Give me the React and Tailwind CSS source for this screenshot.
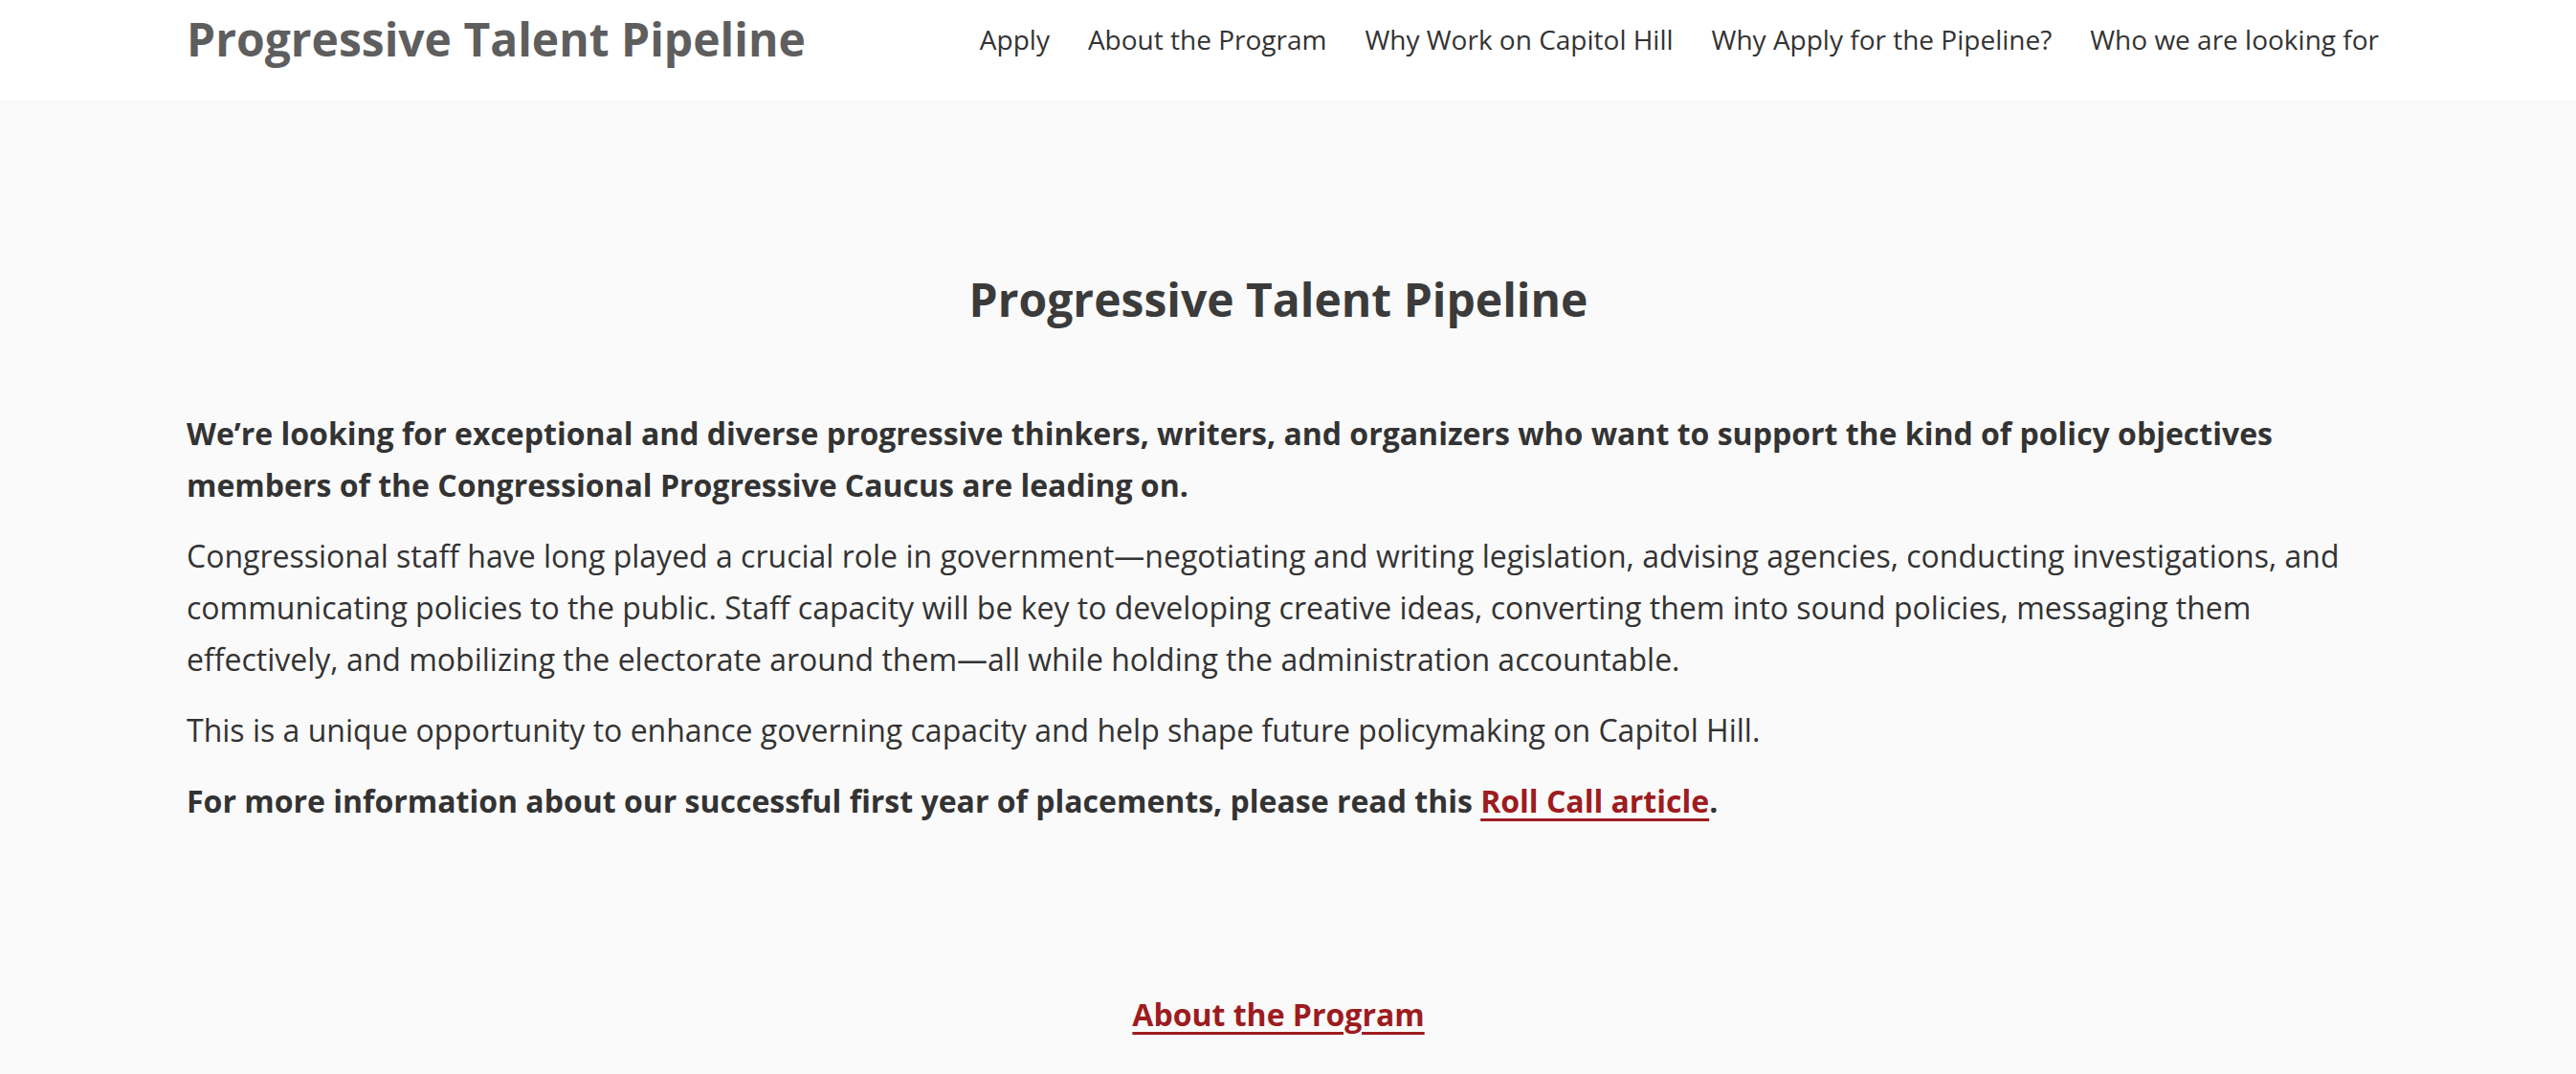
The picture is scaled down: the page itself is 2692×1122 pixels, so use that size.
import React from "react";

const navItems = [
  "Apply",
  "About the Program",
  "Why Work on Capitol Hill",
  "Why Apply for the Pipeline?",
  "Who we are looking for",
];

export default function App() {
  return (
    <div className="min-h-screen bg-[#fafafa] font-['Open_Sans',sans-serif] text-[#333333]">
      <header className="flex h-[105px] items-center justify-between bg-white pb-[23px] pl-[195px] pr-[206px] shadow-[0_2px_6px_rgba(0,0,0,0.02)]">
        <a className="text-[48px] font-bold text-[#5e5e5e]">Progressive Talent Pipeline</a>
        <nav className="flex items-center gap-[40px] text-[28px] text-[#333333]">
          {navItems.map((item) => (
            <a key={item}>{item}</a>
          ))}
        </nav>
      </header>

      <main className="pl-[195px] pr-[215px] pt-[184px]">
        <h1 className="text-center text-[48px] font-bold leading-none text-[#3b3b3b]">
          Progressive Talent Pipeline
        </h1>

        <div className="mt-[89px] space-y-[20px] text-[32px] leading-[54px]">
          <p className="font-bold">
            We’re looking for exceptional and diverse progressive thinkers, writers, and organizers who want to support the kind of policy objectives members of the Congressional Progressive Caucus are leading on.
          </p>
          <p>
            Congressional staff have long played a crucial role in government—negotiating and writing legislation, advising agencies, conducting investigations, and communicating policies to the public. Staff capacity will be key to developing creative ideas, converting them into sound policies, messaging them effectively, and mobilizing the electorate around them—all while holding the administration accountable.
          </p>
          <p>
            This is a unique opportunity to enhance governing capacity and help shape future policymaking on Capitol Hill.
          </p>
          <p className="font-bold">
            For more information about our successful first year of placements, please read this{" "}
            <a className="text-[#9d1c20] underline underline-offset-[6px]">Roll Call article</a>.
          </p>
        </div>

        <div className="mt-[172px] text-center text-[32px] font-bold">
          <a className="text-[#9d1c20] underline underline-offset-[6px]">About the Program</a>
        </div>
      </main>
    </div>
  );
}
